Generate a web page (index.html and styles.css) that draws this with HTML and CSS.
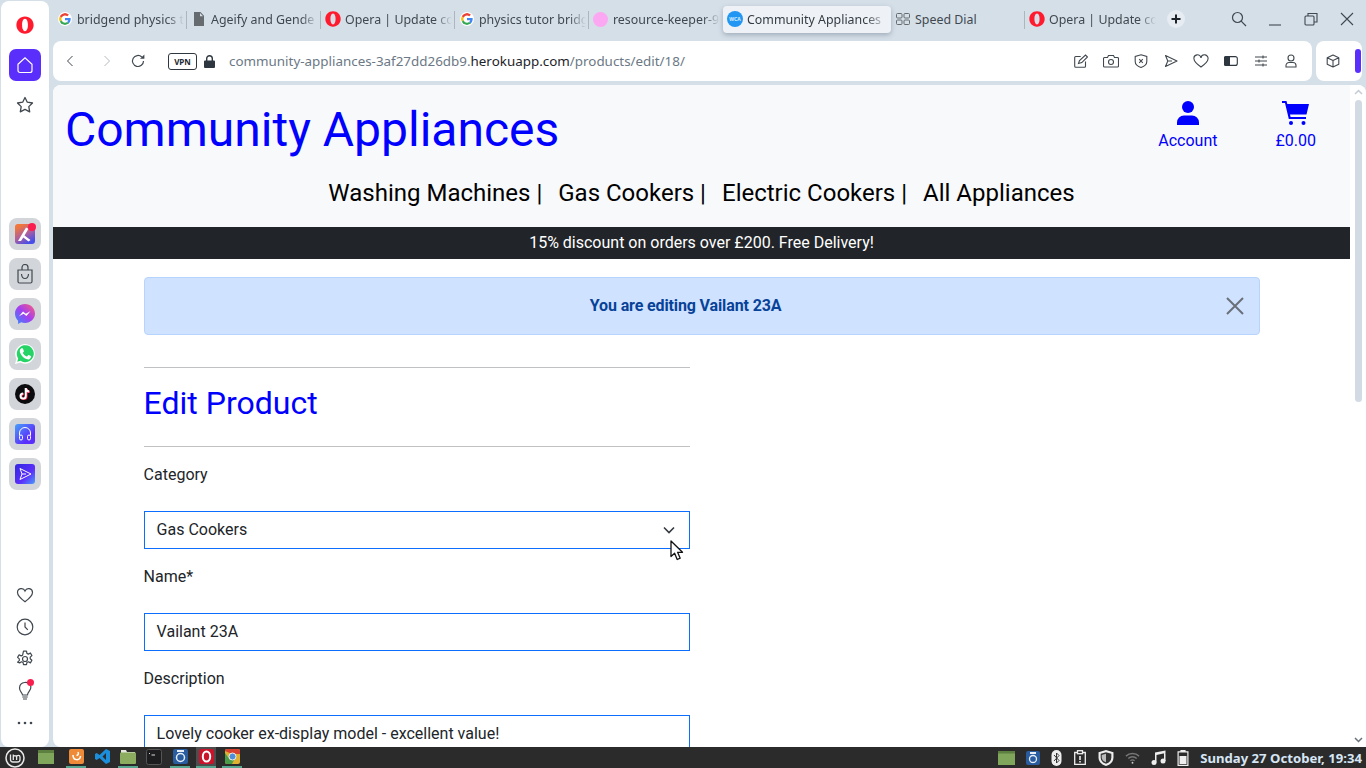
FILE: index.html
```html
<!DOCTYPE html>
<html lang="en">
<head>
  <meta charset="UTF-8" />
  <title>Community Appliances</title>
  <link rel="stylesheet" href="styles.css">
</head>
<body>
  <svg class="defs" width="0" height="0">
    <defs>
      <symbol id="g-logo" viewBox="0 0 48 48">
        <path fill="#EA4335" d="M24 9.5c3.5 0 6.7 1.2 9.2 3.6l6.9-6.9C35.9 2.4 30.5 0 24 0 14.6 0 6.5 5.4 2.6 13.2l8 6.2C12.4 13.7 17.700 9.500 24 9.500z"/>
        <path fill="#4285F4" d="M46.900 24.500c0-1.600-.1-3.100-.4-4.500H24v9h12.900c-.6 3-2.200 5.500-4.800 7.200l7.700 6c4.500-4.200 7.100-10.300 7.100-17.700z"/>
        <path fill="#FBBC05" d="M10.500 28.600c-.5-1.500-.8-3-.8-4.600s.3-3.100.8-4.600l-8-6.200C.9 16.500 0 20.100 0 24s.9 7.500 2.600 10.800l7.900-6.200z"/>
        <path fill="#34A853" d="M24 48c6.500 0 11.900-2.100 15.900-5.800l-7.700-6c-2.200 1.400-4.900 2.300-8.200 2.300-6.300 0-11.600-4.200-13.500-9.900l-8 6.200C6.500 42.600 14.600 48 24 48z"/>
      </symbol>
      <symbol id="o-logo" viewBox="0 0 24 24">
        <path fill="#ff1b2d" fill-rule="evenodd" d="M12 .5C5.300.5.500 5.600.500 12s4.800 11.500 11.500 11.500S23.500 18.400 23.500 12 18.700.5 12 .5zm0 3.300c2.500 0 3.900 3.700 3.900 8.200s-1.400 8.200-3.900 8.200-3.900-3.700-3.900-8.200S9.500 3.800 12 3.800z"/>
      </symbol>
    </defs>
  </svg>

  <div class="desktop">
    <aside class="sidebar">
      <svg class="side-logo" width="18" height="18"><use href="#o-logo"/></svg>
      <div class="home-btn">
        <svg width="18" height="18" viewBox="0 0 18 18" fill="none" stroke="#fff" stroke-width="1.200"><path d="M2 8.200 9 1.800l7 6.400v6.300a2 2 0 0 1-2 2H4a2 2 0 0 1-2-2z"/></svg>
      </div>
      <svg class="side-icon star" width="18" height="18" viewBox="0 0 18 18" fill="none" stroke="#40484f" stroke-width="1.300" stroke-linejoin="round"><path d="M9 1.500l2.300 4.700 5.200.8-3.700 3.600.9 5.200L9 13.400l-4.700 2.400.9-5.200L1.500 7l5.200-.8z"/></svg>

      <div class="app-tiles">
        <div class="tile"><div class="app app-aria"><svg width="20" height="20" viewBox="0 0 20 20"><path d="M3 17 11 3.500l2.500 1.300L9.500 11.500l6 4.500-2 1.500-5.200-4L6 17z" fill="#fff"/></svg></div><span class="dot tile-dot"></span></div>
        <div class="tile">
          <svg width="18" height="20" viewBox="0 0 18 20" fill="none" stroke="#40484f" stroke-width="1.200"><path d="M2 6h14v11.500a1.500 1.500 0 0 1-1.500 1.500h-11A1.500 1.500 0 0 1 2 17.500zM6 6V3.500a3 3 0 0 1 6 0V6M5.500 10c.4 6 6.600 6 7 0"/></svg>
        </div>
        <div class="tile">
          <svg width="20" height="20" viewBox="0 0 20 20"><defs><linearGradient id="msg" x1="0" y1="1" x2="1" y2="0"><stop offset="0" stop-color="#2f8bff"/><stop offset=".5" stop-color="#a33ff0"/><stop offset="1" stop-color="#ff5f78"/></linearGradient></defs><path fill="url(#msg)" d="M10 0C4.400 0 0 4.100 0 9.600c0 2.900 1.200 5.400 3.100 7.100V20l3-1.700c1.200.5 2.500.7 3.900.7 5.600 0 10-4 10-9.400S15.600 0 10 0z"/><path fill="#fff" d="M4 12.300 8 7.500l2.800 2.300 4.600-2.600-4 4.800-2.800-2.300z"/></svg>
        </div>
        <div class="tile">
          <svg width="20" height="20" viewBox="0 0 20 20"><path fill="#fff" d="M0 20l1.500-5.200A9.800 9.800 0 1 1 5.300 18.500z"/><path fill="#25d366" d="M2.200 17.800l1-3.400a8.500 8.500 0 1 1 2.400 2.400z"/><path fill="#fff" d="M7.400 5.500c-.3-.6-.6-.6-.9-.6h-.7c-.3 0-.7.100-1 .5-.4.400-1.300 1.300-1.300 3s1.300 3.500 1.500 3.700c.2.300 2.500 4 6.200 5.400 3 .9 3.700.1 4.300-.5.600-.5 1.200-1.600 1.300-2.300 0-.5-.1-.6-.3-.8l-2.300-1.100c-.4-.2-.6-.2-.9.2l-1 1.300c-.2.200-.4.300-.8.100-2.100-.9-3.600-2.500-4.300-3.800-.2-.4 0-.6.200-.8l.9-1.100c.1-.3.100-.5 0-.7z" transform="translate(1.800 .2) scale(.85)"/></svg>
        </div>
        <div class="tile">
          <svg width="20" height="20" viewBox="0 0 20 20"><circle cx="10" cy="10" r="10" fill="#0c0c0f"/><path fill="none" stroke="#fe2c55" stroke-width="2" d="M11.500 4.500v8a2.600 2.600 0 1 1-2.600-2.600M11.500 5c.4 1.800 1.600 2.800 3.400 3"/><path fill="none" stroke="#fff" stroke-width="2" d="M10.700 4v8a2.600 2.600 0 1 1-2.600-2.600M10.700 4.500c.4 1.800 1.600 2.800 3.400 3"/></svg>
        </div>
        <div class="tile"><div class="app app-music"><svg width="14" height="14" viewBox="0 0 14 14" fill="none" stroke="#fff" stroke-width="1"><path d="M1.500 8.500V6a5.500 5.500 0 0 1 11 0v2.500"/><rect x="1.500" y="8" width="3" height="5" rx="1.500"/><rect x="9.500" y="8" width="3" height="5" rx="1.500"/></svg></div></div>
        <div class="tile"><div class="app app-play"><svg width="14" height="14" viewBox="0 0 14 14" fill="none" stroke="#fff" stroke-width="1" stroke-linejoin="round"><path d="M2 1.500 13 7 2 12.500 4 7zM4 7h4"/></svg></div></div>
      </div>

      <div class="side-bottom">
        <svg width="18" height="18" viewBox="0 0 18 18" fill="none" stroke="#40484f" stroke-width="1.200"><path d="M9 15.800C4 12 1.500 9.600 1.500 6.500a3.900 3.900 0 0 1 7.500-1.500 3.900 3.900 0 0 1 7.500 1.500c0 3.100-2.500 5.500-7.500 9.300z"/></svg>
        <svg width="18" height="18" viewBox="0 0 18 18" fill="none" stroke="#40484f" stroke-width="1.200"><circle cx="9" cy="9" r="7.800"/><path d="M9 4.500V9l2.800 2.800"/></svg>
        <svg width="18" height="18" viewBox="0 0 18 18" fill="none" stroke="#40484f" stroke-width="1.200" stroke-linejoin="round"><circle cx="9" cy="9" r="2.500"/><path d="M7.500 1.200h3l.4 2.200 1.500.7 2-1.100 1.500 2.600-1.700 1.500v1.700l1.700 1.500-1.500 2.600-2-1.100-1.500.7-.4 2.200h-3l-.4-2.200-1.500-.7-2 1.100L1.600 12.100l1.700-1.500V8.900L1.600 7.400l1.500-2.600 2 1.100 1.500-.7z"/></svg>
        <div class="bulb">
          <svg width="18" height="20" viewBox="0 0 18 20" fill="none" stroke="#40484f" stroke-width="1.200"><path d="M6.500 14c0-2.500-3-3.200-3-7a5.800 5.800 0 0 1 11.400-1.200c.3 3.800-3.400 5-3.400 8.200zM6.300 16h5.400M7 18h4"/></svg>
          <span class="dot bulb-dot"></span>
        </div>
        <svg width="18" height="6" viewBox="0 0 18 6" fill="#40484f"><circle cx="3" cy="3" r="1.300"/><circle cx="9" cy="3" r="1.300"/><circle cx="15" cy="3" r="1.300"/></svg>
      </div>
    </aside>

    <div class="browser">
      <div class="tabs">
        <div class="tab sep"><svg class="fav fav-g" width="14" height="14"><use href="#g-logo"/></svg><span class="tab-title">bridgend physics t</span></div>
        <div class="tab sep"><svg class="fav" width="14" height="14" viewBox="0 0 14 14"><path fill="#666b70" d="M2 0h6.500L12 3.800V14H2zM8 1v3.300h3z"/></svg><span class="tab-title">Ageify and Gende</span></div>
        <div class="tab sep"><svg class="fav fav-o" width="16" height="16"><use href="#o-logo"/></svg><span class="tab-title">Opera | Update co</span></div>
        <div class="tab sep"><svg class="fav fav-g" width="14" height="14"><use href="#g-logo"/></svg><span class="tab-title">physics tutor bridg</span></div>
        <div class="tab"><span class="fav pink-fav"></span><span class="tab-title">resource-keeper-9</span></div>
        <div class="tab active"><span class="fav wca-fav">WCA</span><span class="tab-title">Community Appliances</span></div>
        <div class="tab tab-dial sep"><svg class="fav" width="14" height="14" viewBox="0 0 14 14" fill="none" stroke="#666b70"><rect x=".5" y="1.500" width="5.500" height="4.500" rx="1"/><rect x="8" y="1.500" width="5.500" height="4.500" rx="1"/><rect x=".5" y="8" width="5.500" height="4.500" rx="1"/><rect x="8" y="8" width="5.500" height="4.500" rx="1"/></svg><span class="tab-title plain">Speed Dial</span></div>
        <div class="tab"><svg class="fav fav-o" width="16" height="16"><use href="#o-logo"/></svg><span class="tab-title">Opera | Update co</span></div>
        <div class="new-tab">
          <svg width="10" height="10" viewBox="0 0 10 10" stroke="#1d2329" stroke-width="2"><path d="M5 .5v9M.5 5h9"/></svg>
        </div>
        <div class="win-btns">
          <svg width="16" height="16" viewBox="0 0 16 16" fill="none" stroke="#40484f" stroke-width="1.200"><circle cx="6.500" cy="6.500" r="5"/><path d="M10.200 10.200 15 15"/></svg>
          <svg width="14" height="14" viewBox="0 0 14 14" stroke="#40484f" stroke-width="1.100"><path d="M1 13h12"/></svg>
          <svg width="14" height="14" viewBox="0 0 14 14" fill="none" stroke="#40484f" stroke-width="1.100"><rect x="1" y="4" width="9" height="9" rx="1"/><path d="M4 4V1.500h9V10h-3"/></svg>
          <svg width="14" height="14" viewBox="0 0 14 14" stroke="#40484f" stroke-width="1.100"><path d="M1 1l12 12M13 1 1 13"/></svg>
        </div>
      </div>

      <div class="toolbar">
        <div class="address-bar">
          <svg class="nav-icon" width="8" height="12" viewBox="0 0 8 12" fill="none" stroke="#40484f"><path d="M6.500 1 1.500 6l5 5"/></svg>
          <svg class="nav-icon fwd" width="8" height="12" viewBox="0 0 8 12" fill="none" stroke="#b5bcc2"><path d="M1.500 1l5 5-5 5"/></svg>
          <svg class="nav-icon reload" width="14" height="14" viewBox="0 0 14 14" fill="none" stroke="#40484f" stroke-width="1.200"><path d="M12.500 7A5.500 5.500 0 1 1 10.800 3"/><path fill="#40484f" stroke="none" d="M9 4.700h4.400V.4z"/></svg>
          <span class="vpn">VPN</span>
          <svg class="lock" width="11" height="13" viewBox="0 0 11 13"><path fill="#2e3740" d="M1 5.500h9a1 1 0 0 1 1 1V12a1 1 0 0 1-1 1H1a1 1 0 0 1-1-1V6.500a1 1 0 0 1 1-1z"/><path fill="none" stroke="#2e3740" stroke-width="1.400" d="M2.700 6V3.500a2.800 2.800 0 0 1 5.600 0V6"/></svg>
          <span class="url">community-appliances-3af27dd26db9.<b>herokuapp.com</b>/products/edit/18/</span>
          <div class="bar-icons">
            <svg width="14" height="14" viewBox="0 0 14 14" fill="none" stroke="#40484f" stroke-width="1.100"><path d="M11.500 7.500v4.800a1 1 0 0 1-1 1H1.700a1 1 0 0 1-1-1V3.500a1 1 0 0 1 1-1h5"/><path d="M4.500 9.500l1-3 6-5.500 2 2-5.700 5.600z"/></svg>
            <svg width="16" height="14" viewBox="0 0 16 14" fill="none" stroke="#40484f" stroke-width="1.100"><path d="M1.500 3.500h3l1-2h5l1 2h3a1 1 0 0 1 1 1v7.500a1 1 0 0 1-1 1h-13a1 1 0 0 1-1-1V4.500a1 1 0 0 1 1-1z"/><circle cx="8" cy="8" r="2.500"/></svg>
            <svg width="14" height="14" viewBox="0 0 14 14" fill="none" stroke="#40484f" stroke-width="1.100"><path d="M7 .8 12.800 2.500v5c0 3-2.800 5-5.800 6-3-1-5.800-3-5.800-6v-5z"/><path d="M5.200 5.200l3.600 3.600M8.800 5.200 5.200 8.800"/></svg>
            <svg width="14" height="14" viewBox="0 0 14 14" fill="none" stroke="#40484f" stroke-width="1.100" stroke-linejoin="round"><path d="M1.500 1.500 13 7 1.500 12.500 3.800 7zM3.800 7H8"/></svg>
            <svg width="16" height="14" viewBox="0 0 16 14" fill="none" stroke="#40484f" stroke-width="1.100"><path d="M8 13C3.500 9.800 1 7.800 1 5a3.500 3.500 0 0 1 7-1.200A3.500 3.500 0 0 1 15 5c0 2.800-2.500 4.800-7 8z"/></svg>
            <svg width="14" height="10" viewBox="0 0 14 10"><path fill="none" stroke="#2e3740" stroke-width="1.100" d="M1.500.6h9.800a2 2 0 0 1 2 2v4.800a2 2 0 0 1-2 2H1.500a1 1 0 0 1-1-1V1.600a1 1 0 0 1 1-1z"/><path fill="#2e3740" d="M1.500.6H6v8.800H1.500a1 1 0 0 1-1-1V1.600a1 1 0 0 1 1-1z"/></svg>
            <svg width="14" height="12" viewBox="0 0 14 12" stroke="#40484f" stroke-width="1.100"><path d="M1 2h12M1 6h12M1 10h12"/><path d="M9 .5v3M5 4.500v3M9 8.500v3"/></svg>
            <svg width="12" height="14" viewBox="0 0 12 14" fill="none" stroke="#40484f" stroke-width="1.100"><circle cx="6" cy="4" r="3"/><path d="M1 13v-1.500A3 3 0 0 1 4 8.500h4a3 3 0 0 1 3 3V13z"/></svg>
          </div>
        </div>
        <div class="ext-box">
          <svg width="14" height="14" viewBox="0 0 14 14" fill="none" stroke="#40484f" stroke-width="1.100" stroke-linejoin="round"><path d="M7 1 12.800 3.800v6.400L7 13 1.200 10.200V3.800zM1.200 3.800 7 6.500l5.800-2.700M7 6.500V13"/></svg>
          <span class="ext-pill"></span>
        </div>
      </div>

      <div class="viewport">
        <div class="page">
          <header class="site-header">
            <div class="brand-row">
              <h1 class="brand">Community Appliances</h1>
              <div class="header-links">
                <a class="header-link">
                  <svg width="22" height="24" viewBox="0 0 22 24" fill="#00f"><circle cx="11" cy="6" r="6"/><path d="M0 24v-2.500A7 7 0 0 1 7 14.500h8a7 7 0 0 1 7 7V24z"/></svg>
                  <span>Account</span>
                </a>
                <a class="header-link">
                  <svg width="27" height="24" viewBox="0 0 27 24" fill="#00f"><path d="M0 0h4.500l.8 3H27l-2.500 10.500H8l.6 2.500H24v2H6.800L3 2H0z"/><circle cx="9" cy="22" r="2"/><circle cx="21.500" cy="22" r="2"/></svg>
                  <span>£0.00</span>
                </a>
              </div>
            </div>
            <nav class="main-nav">
              <a>Washing Machines |</a>
              <a>Gas Cookers |</a>
              <a>Electric Cookers |</a>
              <a>All Appliances</a>
            </nav>
          </header>
          <div class="promo">15% discount on orders over £200. Free Delivery!</div>

          <main class="content">
            <div class="alert">
              <span>You are editing Vailant 23A</span>
              <svg class="alert-close" width="18" height="18" viewBox="0 0 18 18" stroke="#6a7079" stroke-width="2"><path d="M1 1l16 16M17 1 1 17"/></svg>
            </div>
            <div class="form-col">
              <hr class="rule">
              <h2 class="form-title">Edit Product</h2>
              <hr class="rule rule-low">
              <label class="field-label">Category</label>
              <div class="field select-field">Gas Cookers
                <svg width="12" height="8" viewBox="0 0 12 8" fill="none" stroke="#343a40" stroke-width="1.600"><path d="M1 1.500l5 5 5-5"/></svg>
              </div>
              <label class="field-label">Name*</label>
              <div class="field">Vailant 23A</div>
              <label class="field-label">Description</label>
              <div class="field">Lovely cooker ex-display model - excellent value!</div>
            </div>
          </main>
          <svg class="cursor" width="14" height="21" viewBox="0 0 14 21"><path fill="#fff" stroke="#111" stroke-width="1.300" stroke-linejoin="round" d="M1 1v15.500l3.600-3.200 2.600 6.200 3-1.300-2.600-5.900h4.900z"/></svg>
        </div>
        <div class="scrollbar">
          <svg width="9" height="6" viewBox="0 0 9 6" fill="none" stroke="#c4ccd4" stroke-width="1.500"><path d="M1 5l3.500-3.500L8 5"/></svg>
          <div class="thumb"></div>
          <svg class="arrow-down" width="9" height="6" viewBox="0 0 9 6" fill="none" stroke="#69717a" stroke-width="1.500"><path d="M1 1l3.500 3.500L8 1"/></svg>
        </div>
      </div>
    </div>
  </div>

  <footer class="taskbar">
    <div class="task-left">
      <span class="task-item first"><svg width="20" height="20" viewBox="0 0 20 20" fill="none" stroke="#e8e8e8"><circle cx="10" cy="10" r="9" stroke-width="1.500"/><path stroke-width="1.300" d="M5.500 6.500v5a2.500 2.500 0 0 0 2.500 2.500h4.500a2.500 2.500 0 0 0 2.500-2.500V9a1.700 1.700 0 0 0-3.400 0v3M8.300 6.500V12M8.300 9a1.700 1.700 0 0 1 3.300 0"/></svg></span>
      <span class="task-item folder"><svg width="16" height="14" viewBox="0 0 16 14"><rect width="16" height="14" fill="#7fa65a"/><rect width="16" height="3" fill="#5d7f40"/></svg></span>
      <span class="task-item on"><svg width="15" height="15" viewBox="0 0 15 15"><rect width="15" height="15" rx="2" fill="#ef8a39"/><path fill="none" stroke="#fff" stroke-width="1.500" d="M4 6c0 6 7 6 7.500 1M9 3c1 2 0 3-1.500 3.500"/></svg></span>
      <span class="task-item"><svg width="15" height="15" viewBox="0 0 15 15"><path fill="#1b8fdc" d="M11 0l4 2v11l-4 2-6.500-6L1.700 11 0 10V5l1.700-1 2.800 2zM11 4 7.500 7.500 11 11z"/></svg></span>
      <span class="task-item on"><svg width="16" height="14" viewBox="0 0 16 14"><path fill="#e4e8dc" d="M1 0h5l1 2h8v2H1z"/><rect y="2.500" width="16" height="11.500" rx="1" fill="#8cad5f"/></svg></span>
      <span class="task-item"><svg width="16" height="16" viewBox="0 0 16 16"><rect x=".5" y=".5" width="15" height="15" rx="2" fill="#1d1d1f" stroke="#555"/><path stroke="#ddd" d="M3 4l1 1M5.500 6H9"/></svg></span>
      <span class="task-item on"><svg width="15" height="15" viewBox="0 0 15 15"><rect width="15" height="15" rx="2" fill="#2a5ca0"/><rect x="4" y="1" width="7" height="2" fill="#e7eef5"/><circle cx="7.500" cy="8.500" r="4" fill="none" stroke="#e7eef5" stroke-width="1.500"/></svg></span>
      <span class="task-item on current"><svg width="15" height="15" viewBox="0 0 15 15"><rect width="15" height="15" rx="2" fill="#c9142b"/><ellipse cx="7.500" cy="7.500" rx="3.700" ry="5" fill="none" stroke="#fff" stroke-width="2"/></svg></span>
      <span class="task-item on"><svg width="15" height="15" viewBox="0 0 15 15"><rect width="15" height="15" rx="2" fill="#dfb132"/><path fill="#d8412f" d="M0 2a2 2 0 0 1 2-2h11a2 2 0 0 1 2 2v3H7z"/><path fill="#4a9d48" d="M0 4v9a2 2 0 0 0 2 2h5l2-4H5z"/><circle cx="7.500" cy="7.500" r="3.500" fill="#4d8fdb" stroke="#eee"/></svg></span>
    </div>
    <div class="task-right">
      <svg width="17" height="14" viewBox="0 0 17 14"><rect width="17" height="14" fill="#7fa65a"/><rect width="17" height="2.500" fill="#5d7f40"/></svg>
      <svg width="14" height="14" viewBox="0 0 14 14"><rect width="14" height="14" rx="2" fill="#2a5ca0"/><rect x="4" y="1" width="6" height="2" fill="#e7eef5"/><circle cx="7" cy="8" r="3.500" fill="none" stroke="#e7eef5" stroke-width="1.300"/></svg>
      <svg width="11" height="16" viewBox="0 0 10 16"><rect width="10" height="16" rx="5" fill="#eee"/><path fill="none" stroke="#333" d="M2.500 5l5 5.500L5 13V3l2.500 2.500-5 5.500"/></svg>
      <svg width="14" height="15" viewBox="0 0 12 15" fill="none" stroke="#eee" stroke-width="1.300"><path d="M3.500 2.500H.7v11.800h10.600V2.500H8.500"/><rect x="3.500" y=".7" width="5" height="3"/><path stroke-width="1.600" d="M6 6v4M6 11v1.500"/></svg>
      <svg width="16" height="16" viewBox="0 0 14 15"><path fill="#eee" d="M7 0l7 2v5c0 4-3 6.700-7 8-4-1.300-7-4-7-8V2z"/><path fill="#333" d="M7 2l5 1.500v3.500c0 3-2.200 5-5 6-2.800-1-5-3-5-6V3.500z"/><path fill="#bbb" d="M7 3.500 3 4.600V7c0 2.200 1.700 3.700 4 4.600z"/></svg>
      <svg width="15" height="12" viewBox="0 0 16 12" fill="none" stroke="#777" stroke-width="1.500"><path d="M1 4a10 10 0 0 1 14 0M3.500 6.500a6.500 6.500 0 0 1 9 0M5.800 9a3 3 0 0 1 4.400 0"/><circle cx="8" cy="11" r="1" fill="#ccc" stroke="none"/></svg>
      <svg width="15" height="15" viewBox="0 0 15 15" fill="#eee"><path d="M4 2.500 14.500.5V3L5.500 5v7.500H4zM13 2h1.500v9H13z"/><circle cx="3" cy="12.500" r="2.500"/><circle cx="12" cy="11" r="2.500"/></svg>
      <svg width="12" height="16" viewBox="0 0 11 16" fill="none" stroke="#eee" stroke-width="1.200"><path d="M3.500 1.800V.6h4v1.200M.6 1.800h9.800v13.600H.6z"/><rect x="2" y="6" width="7" height="8" fill="#eee" stroke="none"/></svg>
      <span class="clock">Sunday 27 October, 19:34</span>
    </div>
  </footer>
</body>
</html>
```

FILE: styles.css
```css
* {
  box-sizing: border-box;
}

body {
  margin: 0;
  width: 1366px;
  height: 768px;
  overflow: hidden;
  display: flex;
  flex-direction: column;
  background: #d5dfe8;
  font-family: 'Noto Sans', sans-serif;
}

.defs {
  position: absolute;
}

.desktop {
  display: flex;
  height: 747px;
}

/* opera sidebar */
.sidebar {
  width: 48px;
  margin: 1px 4px 0 1px;
  background: #fff;
  border-radius: 8px;
  display: flex;
  flex-direction: column;
  align-items: center;
  padding-top: 15px;
}

.side-logo {
  margin-bottom: 15px;
}

.home-btn {
  width: 32px;
  height: 32px;
  background: #5b2ffb;
  border-radius: 7px;
  display: flex;
  align-items: center;
  justify-content: center;
}

.star {
  margin-top: 15px;
}

.app-tiles {
  margin-top: 104px;
  display: flex;
  flex-direction: column;
  gap: 8px;
}

.tile {
  position: relative;
  width: 32px;
  height: 32px;
  border-radius: 8px;
  background: #d2d6da;
  display: flex;
  align-items: center;
  justify-content: center;
}

.app {
  width: 20px;
  height: 20px;
  border-radius: 3px;
  display: flex;
  align-items: center;
  justify-content: center;
}

.app-aria {
  background: linear-gradient(150deg, #f0763a 15%, #b0609a 50%, #4a4fe8 85%);
}

.app-music {
  background: linear-gradient(135deg, #46a0fa, #5b2ffb 70%);
}

.app-play {
  background: linear-gradient(135deg, #3226e0, #5b2ffb 60%, #4aa0fa);
}

.dot {
  position: absolute;
  width: 7px;
  height: 7px;
  border-radius: 50%;
  background: #fa1e4e;
}

.tile-dot {
  top: 5px;
  right: 5px;
  width: 8px;
  height: 8px;
}

.side-bottom {
  margin-top: auto;
  padding-bottom: 8px;
  display: grid;
  grid-auto-rows: 32px;
  place-items: center;
}

.bulb {
  position: relative;
  height: 20px;
}

.bulb svg {
  display: block;
}

.bulb-dot {
  top: -2px;
  right: 0;
}

/* tabs and address bar */
.browser {
  width: 1313px;
  display: flex;
  flex-direction: column;
}

.tabs {
  height: 41px;
  display: flex;
  align-items: center;
  padding-bottom: 3px;
}

.tab {
  position: relative;
  width: 134px;
  height: 27px;
  display: flex;
  align-items: center;
  gap: 5px;
  padding: 0 3px 0 5px;
  font-size: 12.4px;
  color: #40484f;
}

.tab.sep::after {
  content: "";
  position: absolute;
  right: 0;
  top: 5px;
  height: 18px;
  width: 1px;
  background: #aeb6bd;
}

.tab.active {
  width: 168px;
  gap: 4px;
  background: #eef2f7;
  border-radius: 4px;
  box-shadow: 0 2px 5px rgba(60, 80, 100, .35);
  color: #333b42;
  padding-left: 4px;
}

.tab-title {
  flex: 1;
  overflow: hidden;
  white-space: nowrap;
  mask-image: linear-gradient(to right, #000 84%, transparent 100%);
}

.tab-title.plain {
  mask-image: none;
}

.fav {
  flex: none;
}

.fav-g {
  background: #fff;
  border-radius: 50%;
  padding: 1px;
}

.fav-o {
  margin: 0 -1px;
}

.pink-fav {
  width: 15px;
  height: 15px;
  margin-left: -1px;
  border-radius: 50%;
  background: #fba7f2;
}

.wca-fav {
  width: 16px;
  height: 16px;
  border-radius: 50%;
  background: #2196f3;
  color: #d9efff;
  font-size: 5px;
  font-weight: 700;
  line-height: 16px;
  text-align: center;
}

.new-tab {
  width: 18px;
  height: 18px;
  margin-left: 8px;
  border-radius: 50%;
  background: #e6ecf2;
  display: flex;
  align-items: center;
  justify-content: center;
}

.win-btns {
  margin-left: 46px;
  display: flex;
  align-items: center;
  gap: 22px;
}

.win-btns svg:first-child {
  margin-right: -1px;
}

.toolbar {
  height: 40px;
  display: flex;
  gap: 4px;
}

.address-bar {
  width: 1259px;
  background: #fff;
  border-radius: 8px;
  display: flex;
  align-items: center;
  padding-left: 13px;
}

.fwd {
  margin-left: 29px;
}

.reload {
  margin-left: 20px;
}

.vpn {
  margin-left: 23px;
  width: 29px;
  height: 17px;
  border: 1px solid #2e3740;
  border-radius: 3px;
  font-size: 8px;
  font-weight: 700;
  line-height: 15px;
  text-align: center;
  color: #20272e;
}

.lock {
  margin-left: 7px;
}

.url {
  margin-left: 14px;
  font-size: 13.4px;
  color: #6b7885;
  white-space: nowrap;
}

.url b {
  font-weight: 400;
  color: #1d2329;
}

.bar-icons {
  margin-left: auto;
  padding-right: 6px;
  display: grid;
  grid-auto-flow: column;
  grid-auto-columns: 30px;
  place-items: center;
}

.ext-box {
  width: 46px;
  background: #fff;
  border-radius: 8px;
  display: flex;
  align-items: center;
  padding-left: 10px;
  gap: 15px;
}

.ext-pill {
  width: 6px;
  height: 24px;
  border-radius: 3px;
  background: #5b2ffb;
}

/* the shop page */
.viewport {
  margin-top: 4px;
  flex: 1;
  min-height: 0;
  display: flex;
  background: #fff;
  border-radius: 8px 8px 0 8px;
  overflow: hidden;
}

.page {
  position: relative;
  width: 1297px;
  font-family: Roboto, sans-serif;
  color: #212529;
  overflow: hidden;
}

.site-header {
  height: 142px;
  background: #f8f9fa;
}

.brand-row {
  display: flex;
  justify-content: space-between;
  padding: 16px 0 0 12px;
}

.brand {
  margin: 0;
  font-size: 48px;
  font-weight: 400;
  line-height: 58px;
  color: #00f;
}

.header-links {
  display: flex;
  gap: 58px;
  padding: 0 34px 0 0;
}

.header-link {
  display: flex;
  flex-direction: column;
  align-items: center;
  gap: 6px;
  font-size: 16px;
  color: #00f;
}

.main-nav {
  margin-top: 16px;
  display: flex;
  justify-content: center;
  gap: 16px;
  font-size: 24px;
  line-height: 36px;
  color: #000;
}

.promo {
  height: 32px;
  background: #212529;
  color: #fff;
  font-size: 16px;
  line-height: 32px;
  text-align: center;
}

.content {
  padding: 18px 90.4px 0 90.6px;
}

.alert {
  position: relative;
  height: 58px;
  background: #cfe2ff;
  border: 1px solid #b6d4fe;
  border-radius: 4px;
  padding-right: 32px;
  color: #084298;
  font-size: 16px;
  font-weight: 700;
  letter-spacing: -.13px;
  line-height: 56px;
  text-align: center;
}

.alert-close {
  position: absolute;
  right: 15px;
  top: 19px;
}

.form-col {
  width: 546px;
  padding-top: 32px;
}

.rule {
  margin: 0;
  border: 0;
  border-top: 1px solid #bfc1c3;
}

.rule-low {
  margin-bottom: 16px;
}

.form-title {
  margin: 0 0 8px;
  font-size: 32px;
  font-weight: 400;
  line-height: 70px;
  color: #00f;
}

.field-label {
  display: block;
  font-size: 16px;
  line-height: 24px;
  margin-bottom: 24px;
}

.field {
  height: 38px;
  border: 1px solid #0d6efd;
  padding: 0 12px;
  font-size: 16px;
  line-height: 36px;
  color: #212529;
  margin-bottom: 16px;
  background: #fff;
}

.select-field {
  display: flex;
  justify-content: space-between;
  align-items: center;
  padding-right: 14px;
}

.cursor {
  position: absolute;
  left: 617px;
  top: 455px;
}

.scrollbar {
  width: 16px;
  background: #fff;
  display: flex;
  flex-direction: column;
  align-items: center;
  padding-top: 4px;
}

.thumb {
  margin-top: 5px;
  width: 7px;
  height: 302px;
  border-radius: 4px;
  background: #d2dbe4;
}

.arrow-down {
  margin-top: auto;
  margin-bottom: 4px;
}

/* mint panel */
.taskbar {
  height: 21px;
  background: #2b2b2b;
  display: flex;
  justify-content: space-between;
  align-items: center;
}

.task-left {
  display: flex;
  height: 100%;
  padding-left: 5px;
  gap: 6px;
}

.task-item {
  width: 20px;
  height: 100%;
  display: flex;
  align-items: center;
  justify-content: center;
  border-bottom: 2px solid transparent;
}

.task-item.first {
  margin-right: 5px;
  border: 0;
}

.task-item.folder {
  margin-right: 4px;
}

.task-item.on {
  border-bottom-color: #55a58f;
}

.task-item.current {
  background: #4d4d4d;
}

.task-right {
  display: flex;
  align-items: center;
  gap: 11px;
  padding-right: 4px;
}

.clock {
  font-size: 13.15px;
  font-weight: 700;
  color: #d6e6f5;
  white-space: nowrap;
}
```
